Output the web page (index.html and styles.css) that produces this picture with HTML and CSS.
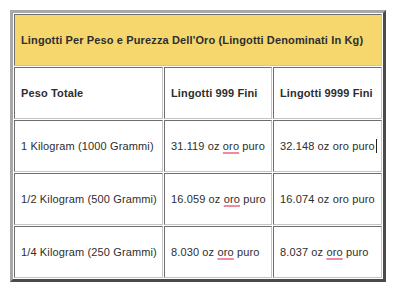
FILE: index.html
```html
<!DOCTYPE html>
<html>
<head>
<meta charset="utf-8">
<link rel="stylesheet" href="styles.css">
</head>
<body>
<table class="gold">
  <colgroup>
    <col class="c1"><col class="c2"><col class="c3">
  </colgroup>
  <tr><td colspan="3" class="title">Lingotti Per Peso e Purezza Dell'Oro (Lingotti Denominati In Kg)</td></tr>
  <tr><td class="head">Peso Totale</td><td class="head">Lingotti 999 Fini</td><td class="head">Lingotti 9999 Fini</td></tr>
  <tr><td>1 Kilogram (1000 Grammi)</td><td>31.119 oz <span class="sp">oro</span> puro</td><td>32.148 oz oro puro<span class="caret"></span></td></tr>
  <tr><td>1/2 Kilogram (500 Grammi)</td><td>16.059 oz <span class="sp">oro</span> puro</td><td>16.074 oz oro puro</td></tr>
  <tr><td>1/4 Kilogram (250 Grammi)</td><td>8.030 oz <span class="sp">oro</span> puro</td><td>8.037 oz <span class="sp">oro</span> puro</td></tr>
</table>
</body>
</html>
```

FILE: styles.css
```css
html, body { margin: 0; padding: 0; background: #ffffff; }
body {
  font-family: "Liberation Sans", Arial, Helvetica, sans-serif;
  color: #2e2e2e;
}
.gold {
  margin: 10px;
  width: 376px;
  table-layout: fixed;
  border-collapse: separate;
  border-spacing: 1px;
  border-style: solid;
  border-width: 3px;
  border-color: #a8a8a8 #4a4a4a #4a4a4a #a8a8a8;
}
.c1 { width: 149px; }
.c2 { width: 108px; }
.c3 { width: 109px; }
.gold td {
  height: 50px;
  box-sizing: content-box;
  padding: 0 0 0 6px;
  border: 1px solid;
  border-color: #6e6e6e #c4c4c4 #c4c4c4 #6e6e6e;
  font-size: 11px;
  line-height: 13px;
  letter-spacing: 0.13px;
  vertical-align: middle;
  white-space: nowrap;
  overflow: hidden;
}
.gold td.title {
  background: #f5d76e;
  font-weight: bold;
}
.gold td.head { font-weight: bold; }
.sp {
  text-decoration: underline;
  text-decoration-color: #f08aa0;
  text-decoration-thickness: 2px;
  text-underline-offset: 2px;
}
.caret {
  display: inline-block;
  width: 0;
  height: 14px;
  border-left: 1px solid #222;
  vertical-align: -3px;
  margin-left: 1px;
}
```
